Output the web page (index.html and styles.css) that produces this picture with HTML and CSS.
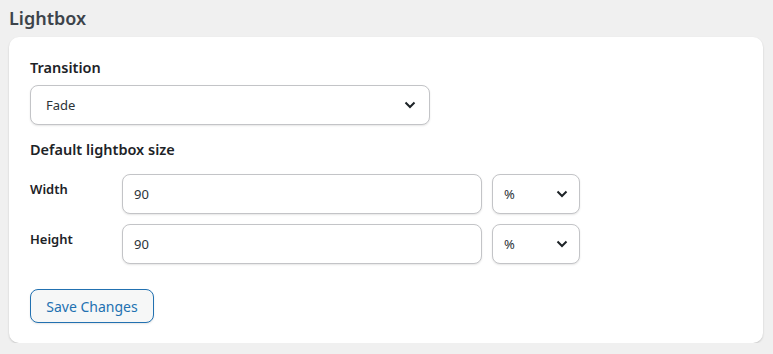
FILE: index.html
```html
<!DOCTYPE html>
<html>
<head>
<meta charset="utf-8">
<link rel="stylesheet" href="styles.css">
</head>
<body>
<div class="page">
  <h2 class="title">Lightbox</h2>
  <div class="card">
    <div class="field">
      <div class="label">Transition</div>
      <div class="select wide"><span>Fade</span><svg class="chev" viewBox="0 0 12 8" width="12" height="8"><path d="M1.5 1.5 L6 6 L10.5 1.5" fill="none" stroke="#1d2327" stroke-width="2"/></svg></div>
    </div>
    <div class="label section">Default lightbox size</div>
    <div class="rows">
      <div class="row">
        <div class="rlabel">Width</div>
        <div class="input">90</div>
        <div class="select unit"><span>%</span><svg class="chev" viewBox="0 0 12 8" width="12" height="8"><path d="M1.5 1.5 L6 6 L10.5 1.5" fill="none" stroke="#1d2327" stroke-width="2"/></svg></div>
      </div>
      <div class="row">
        <div class="rlabel">Height</div>
        <div class="input">90</div>
        <div class="select unit"><span>%</span><svg class="chev" viewBox="0 0 12 8" width="12" height="8"><path d="M1.5 1.5 L6 6 L10.5 1.5" fill="none" stroke="#1d2327" stroke-width="2"/></svg></div>
      </div>
    </div>
    <button class="btn">Save Changes</button>
  </div>
</div>
</body>
</html>
```
FILE: styles.css
```css
html, body {
  margin: 0;
  padding: 0;
  background: #f0f0f0;
}
body {
  font-family: "Noto Sans", "Open Sans", sans-serif;
  color: #1d2327;
}
.page {
  padding: 8px 10px 0 9px;
}
.title {
  margin: 0 0 8px 0;
  font-size: 18px;
  font-weight: 600;
  color: #3c434a;
  line-height: 21px;
}
.card {
  background: #fff;
  border-radius: 10px;
  box-shadow: 0 1px 2px rgba(0,0,0,0.18);
  padding: 20px 21px 20px 21px;
  display: flex;
  flex-direction: column;
}
.label {
  font-size: 14.5px;
  font-weight: 600;
  line-height: 20px;
  color: #1d2327;
}
.field .label {
  margin-bottom: 8px;
}
.select, .input {
  box-sizing: border-box;
  flex-shrink: 0;
  height: 40px;
  border: 1px solid #c3c4c7;
  border-radius: 8px;
  box-shadow: 0 1px 2px rgba(0,0,0,0.1);
  background: #fff;
  font-size: 13px;
  color: #2c3338;
  display: flex;
  align-items: center;
}
.select {
  justify-content: space-between;
}
.wide {
  width: 400px;
  padding: 0 13px 0 15px;
}
.section {
  margin-top: 14px;
  margin-bottom: 15px;
}
.rows {
  display: flex;
  flex-direction: column;
  gap: 10px;
}
.row {
  display: flex;
  align-items: flex-start;
}
.rlabel {
  width: 92px;
  font-size: 13px;
  font-weight: 600;
  line-height: 18px;
  padding-top: 6px;
  color: #1d2327;
}
.input {
  width: 360px;
  padding: 0 11px;
}
.unit {
  width: 88px;
  margin-left: 10px;
  padding: 0 11px 0 11px;
}
.chev {
  display: block;
}
.btn {
  margin-top: 25px;
  align-self: flex-start;
  flex-shrink: 0;
  width: 124px;
  height: 34px;
  border: 1px solid #2271b1;
  border-radius: 8px;
  background: #f6f7f7;
  color: #2271b1;
  font-family: "Noto Sans", "Open Sans", sans-serif;
  font-size: 14px;
  padding: 0;
  box-shadow: 0 1px 2px rgba(0,0,0,0.1);
}
```
